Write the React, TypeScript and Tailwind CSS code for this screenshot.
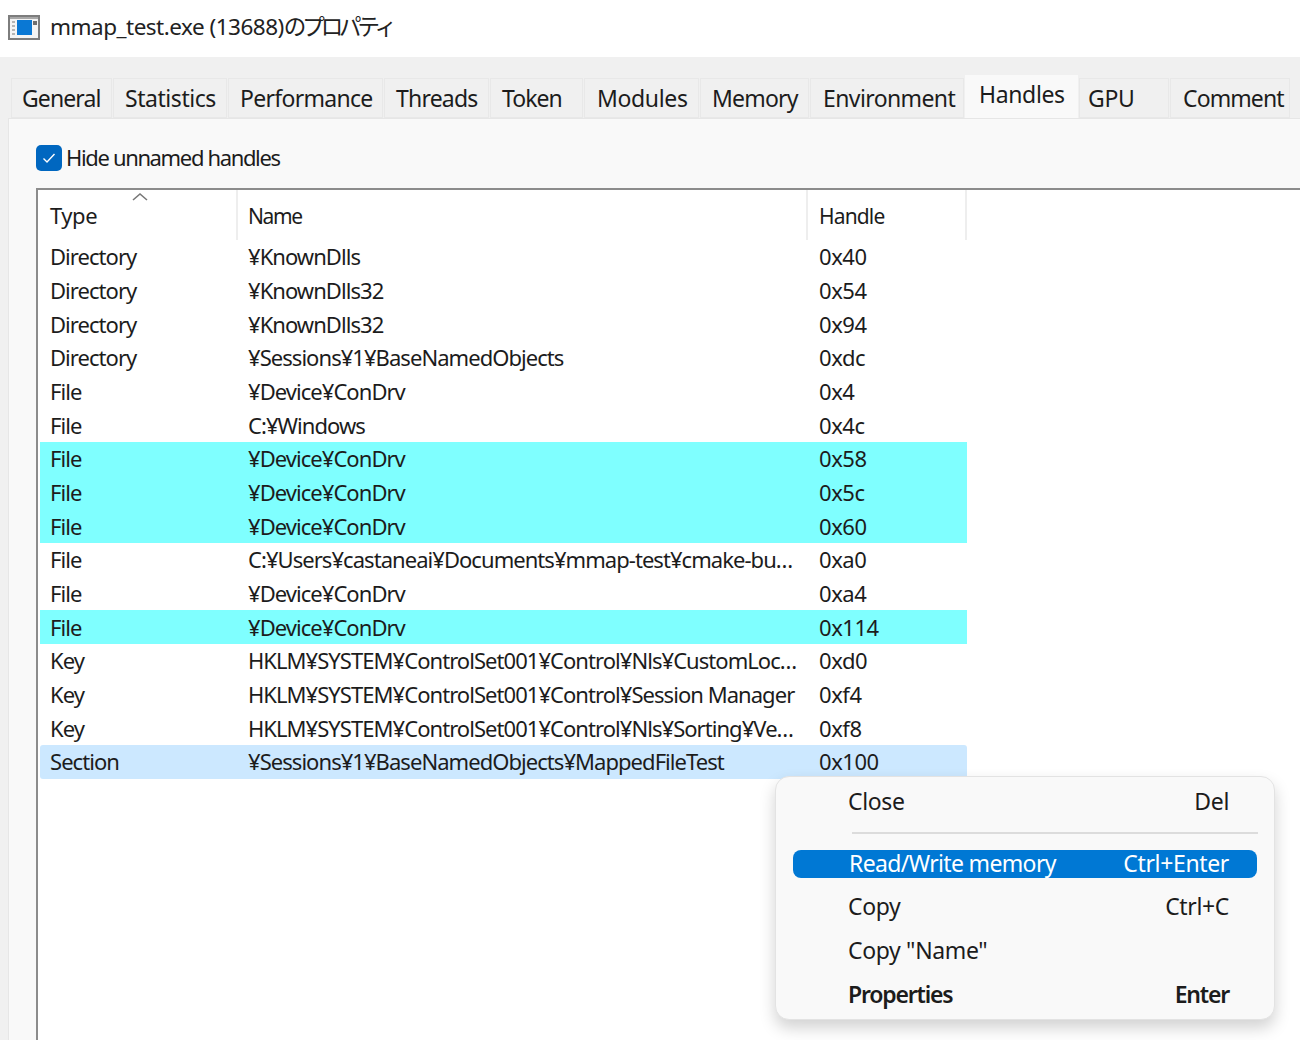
const font = { fontFamily: '"Noto Sans", "Noto Sans CJK JP", sans-serif' };

const tabs = [
  { label: 'General', w: 'w-[101px]', pad: 'pl-[11px]', track: 'tracking-[-0.9px]' },
  { label: 'Statistics', w: 'w-[114px]', pad: 'pl-[12px]', track: 'tracking-[-0.45px]' },
  { label: 'Performance', w: 'w-[155px]', pad: 'pl-[12px]', track: 'tracking-[-0.7px]' },
  { label: 'Threads', w: 'w-[105px]', pad: 'pl-[12px]', track: 'tracking-[-0.8px]' },
  { label: 'Token', w: 'w-[93px]', pad: 'pl-[12px]', track: 'tracking-[-0.95px]' },
  { label: 'Modules', w: 'w-[115px]', pad: 'pl-[13px]', track: 'tracking-[-0.35px]' },
  { label: 'Memory', w: 'w-[109px]', pad: 'pl-[12px]', track: 'tracking-[-0.8px]' },
  { label: 'Environment', w: 'w-[154px]', pad: 'pl-[13px]', track: 'tracking-[-0.6px]' },
];

const rows = [
  ['Directory', '¥KnownDlls', '0x40', ''],
  ['Directory', '¥KnownDlls32', '0x54', ''],
  ['Directory', '¥KnownDlls32', '0x94', ''],
  ['Directory', '¥Sessions¥1¥BaseNamedObjects', '0xdc', ''],
  ['File', '¥Device¥ConDrv', '0x4', ''],
  ['File', 'C:¥Windows', '0x4c', ''],
  ['File', '¥Device¥ConDrv', '0x58', 'bg-[#7fffff]'],
  ['File', '¥Device¥ConDrv', '0x5c', 'bg-[#7fffff]'],
  ['File', '¥Device¥ConDrv', '0x60', 'bg-[#7fffff]'],
  ['File', 'C:¥Users¥castaneai¥Documents¥mmap-test¥cmake-bu…', '0xa0', ''],
  ['File', '¥Device¥ConDrv', '0xa4', ''],
  ['File', '¥Device¥ConDrv', '0x114', 'bg-[#7fffff]'],
  ['Key', 'HKLM¥SYSTEM¥ControlSet001¥Control¥Nls¥CustomLoc…', '0xd0', ''],
  ['Key', 'HKLM¥SYSTEM¥ControlSet001¥Control¥Session Manager', '0xf4', ''],
  ['Key', 'HKLM¥SYSTEM¥ControlSet001¥Control¥Nls¥Sorting¥Ve…', '0xf8', ''],
  ['Section', '¥Sessions¥1¥BaseNamedObjects¥MappedFileTest', '0x100', 'bg-[#cce8ff] rounded-[3px]'],
];

function AppIcon() {
  return (
    <svg width="32" height="25" viewBox="0 0 32 25" className="shrink-0">
      <rect x="1" y="1" width="30" height="23" fill="#f4f4f4" stroke="#7d7d7d" strokeWidth="2" />
      <rect x="2" y="2" width="28" height="2" fill="#a8a8a8" />
      <rect x="9" y="5" width="15" height="15" fill="#0a78d4" />
      <path d="M4 7h3M4 11h3M4 15h3M4 19h3" stroke="#a0a0a0" strokeWidth="1.5" />
      <rect x="25" y="6" width="4" height="4" fill="#6f6f6f" />
    </svg>
  );
}

function MenuItem({ label, hint, bold }: { label: string; hint?: string; bold?: boolean }) {
  return (
    <div className={`flex h-[44px] items-center pl-[72px] pr-[45px] text-[#1c1c1c] ${bold ? 'font-semibold tracking-[-1.2px]' : ''}`}>
      <span>{label}</span>
      <span className="ml-auto">{hint}</span>
    </div>
  );
}

export default function App() {
  return (
    <div className="relative h-[1040px] w-[1300px] overflow-hidden bg-[#f0f0f0] text-[23px] tracking-[-0.35px] text-[#1c1c1c]" style={font}>
      {/* Title */}
      <div className="flex h-[57px] items-center gap-[10px] bg-white pb-[3px] pl-[8px] text-[22.5px] tracking-[-0.5px] text-[#222]">
        <AppIcon />
        <span>mmap_test.exe (13688)<span className="tracking-[-4.1px]">のプロパティ</span></span>
      </div>

      {/* Tabs */}
      <div className="flex h-[61px] items-end gap-px pl-[11px]">
        {tabs.map((t) => (
          <div key={t.label} className={`flex h-[40px] items-center bg-[#f0f0f0] shadow-[inset_0_0_0_1px_#e8e8e8] ${t.w} ${t.pad} ${t.track}`}>
            {t.label}
          </div>
        ))}
        <div className="flex h-[43px] w-[113px] items-center bg-[#f9f9f9] pb-[5px] pl-[14px]">Handles</div>
        <div className="flex h-[40px] w-[90px] items-center bg-[#f0f0f0] pl-[9px] shadow-[inset_0_0_0_1px_#e8e8e8]">GPU</div>
        <div className="flex h-[40px] w-[120px] items-center bg-[#f0f0f0] pl-[13px] tracking-[-0.9px] shadow-[inset_0_0_0_1px_#e8e8e8]">Comment</div>
      </div>

      {/* Panel */}
      <div className="ml-[8px] flex h-[922px] flex-col border-l border-t border-[#e6e6e6] bg-[#f9f9f9] pl-[27px]">
        <div className="flex h-[69px] items-center gap-[4px] pb-[1px] pt-[10px]">
          <div className="flex h-[26px] w-[26px] items-center justify-center rounded-[5px] bg-[#0067c0]">
            <svg width="16" height="16" viewBox="0 0 16 16" fill="none" stroke="#fff" strokeWidth="1.4">
              <path d="m2.5 8.5 3.5 3.5 7.5-8" />
            </svg>
          </div>
          <span className="pb-[2px] text-[22px] tracking-[-1.35px]">Hide unnamed handles</span>
        </div>

        <div className="flex-1 border-l-2 border-t-2 border-[#8c8c8c] bg-white pl-[2px] text-[22px] tracking-[-0.95px]">
          {/* Header */}
          <div className="relative flex h-[50px] items-center">
            <svg width="18" height="10" viewBox="0 0 18 10" fill="none" stroke="#777" strokeWidth="1.6" className="absolute left-[91px] top-[2px]">
              <path d="m2 8 7-6 7 6" />
            </svg>
            <div className="flex h-full w-[198px] items-center border-r-2 border-[#eeeeee] pl-[10px] tracking-[-0.45px]">Type</div>
            <div className="flex h-full w-[570px] items-center border-r-2 border-[#eeeeee] pl-[10px] pt-[3px] text-[21px] tracking-[-1.4px]">Name</div>
            <div className="flex h-full w-[159px] items-center border-r-2 border-[#eeeeee] pl-[11px] pt-[3px] text-[21px] tracking-[-0.85px]">Handle</div>
          </div>

          {/* Rows */}
          <div className="w-[927px]">
            {rows.map(([type, name, handle, bg], i) => (
              <div key={i} className={`flex h-[33.67px] items-center whitespace-nowrap ${bg}`}>
                <div className="w-[197px] pl-[10px]">{type}</div>
                <div className="w-[571px] pl-[11px]">{name}</div>
                <div className="pl-[11px] tracking-[-0.45px]">{handle}</div>
              </div>
            ))}
          </div>
        </div>
      </div>

      {/* Context menu */}
      <div className="absolute left-[775px] top-[776px] h-[244px] w-[500px] rounded-[14px] border border-[#e3e3e3] bg-[#f9f9f9] pt-[2px] shadow-[0_8px_16px_rgba(0,0,0,0.18)]">
        <MenuItem label="Close" hint="Del" />
        <div className="ml-[76px] mr-[16px] mt-[9px] h-[2px] bg-[#dcdcdc]" />
        <div className="mx-[17px] mt-[16px] flex h-[28px] items-center rounded-[8px] bg-[#0078d4] pb-[1px] pl-[56px] pr-[28px] text-white">
          <span className="tracking-[-0.65px]">Read/Write memory</span>
          <span className="ml-auto">Ctrl+Enter</span>
        </div>
        <div className="h-[6px]" />
        <MenuItem label="Copy" hint="Ctrl+C" />
        <MenuItem label={'Copy "Name"'} />
        <MenuItem label="Properties" hint="Enter" bold />
      </div>
    </div>
  );
}
